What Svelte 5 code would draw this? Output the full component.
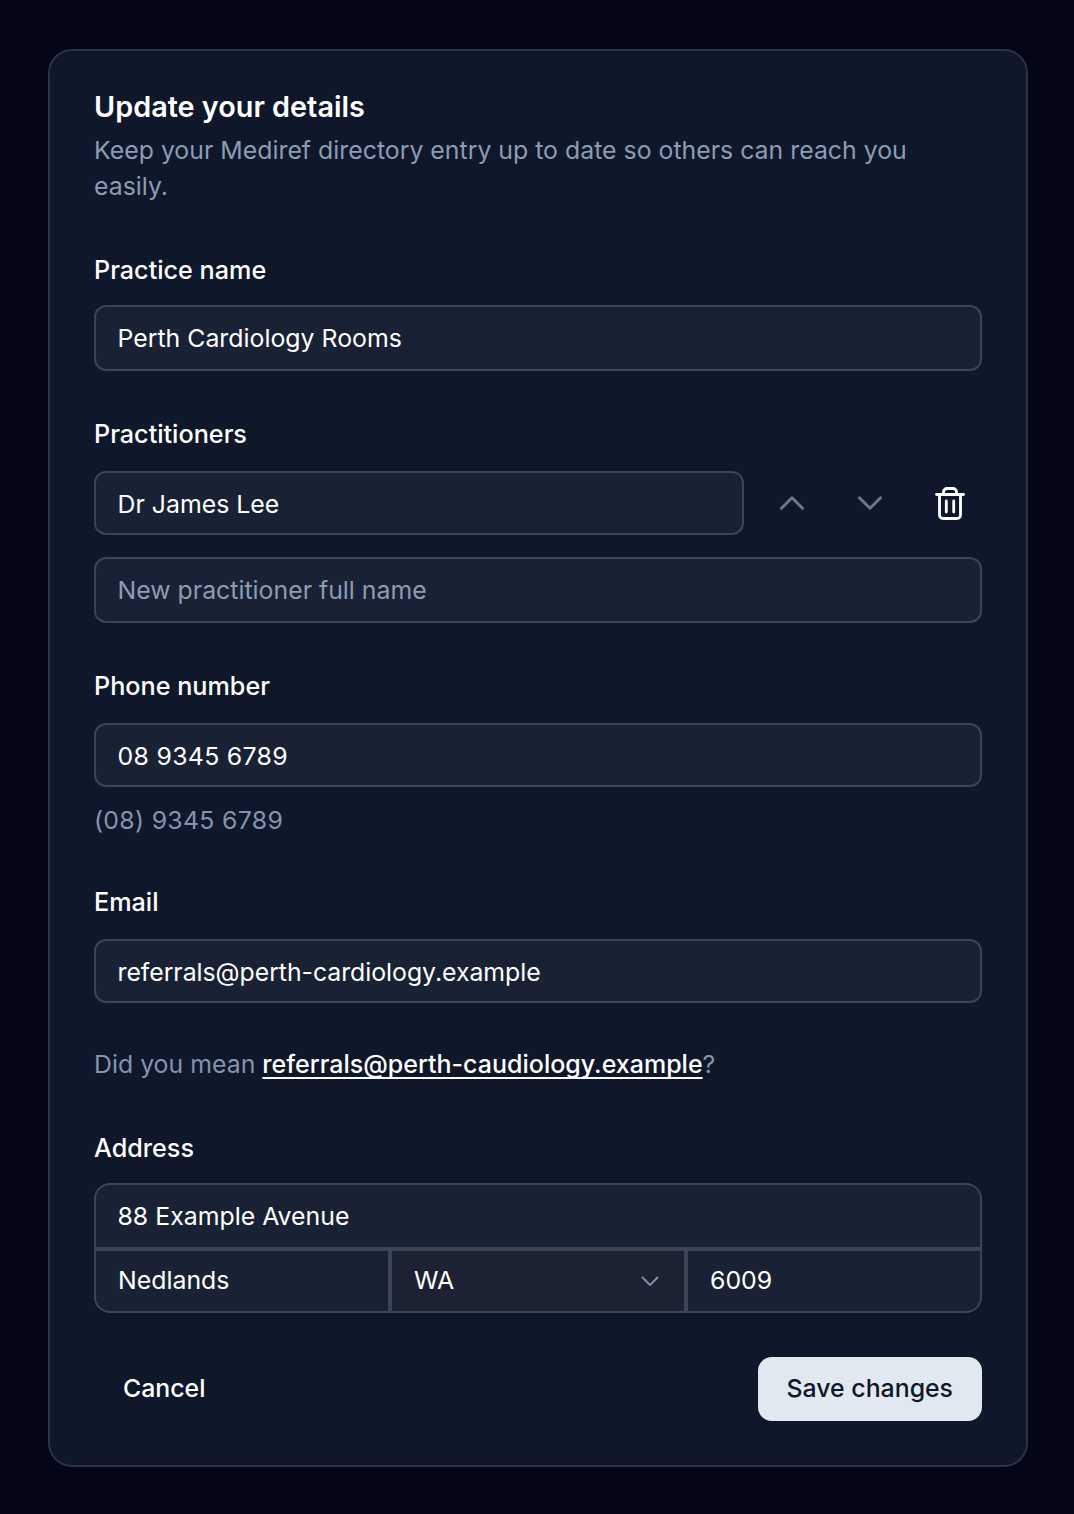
<script lang="ts">
	let practice = $state('Perth Cardiology Rooms');
	let newName = $state('');
	let phone = $state('08 9345 6789');
	let email = $state('referrals@perth-cardiology.example');
	let street = $state('88 Example Avenue');
	let suburb = $state('Nedlands');
	let region = $state('WA');
	let postcode = $state('6009');

	const REGIONS = ['ACT', 'NSW', 'NT', 'QLD', 'SA', 'TAS', 'VIC', 'WA'];
</script>

<main class="page">
	<form class="card" onsubmit={(e) => e.preventDefault()}>
		<header class="head">
			<h1>Update your details</h1>
			<p>Keep your Mediref directory entry up to date so others can reach you easily.</p>
		</header>

		<section class="field practice">
			<label for="practice">Practice name</label>
			<input id="practice" class="tall" bind:value={practice} />
		</section>

		<section class="field practitioners">
			<label for="pr-0">Practitioners</label>
			<div class="row">
				<input id="pr-0" value="Dr James Lee" />
				<button type="button" class="icon up" aria-label="Move up">
					<svg viewBox="0 0 24 24" width="36" height="36"><path d="M5 15.500l7-7 7 7" /></svg>
				</button>
				<button type="button" class="icon down" aria-label="Move down">
					<svg viewBox="0 0 24 24" width="36" height="36"><path d="M5 8.500l7 7 7-7" /></svg>
				</button>
				<button type="button" class="icon trash" aria-label="Remove">
					<svg viewBox="0 0 30 33" width="30" height="33">
						<path d="M1.500 7.500h27M4.500 7.500v20.500a3.500 3.500 0 0 0 3.500 3.500h14a3.500 3.500 0 0 0 3.500-3.500V7.500M8.500 7.500V5a3.500 3.500 0 0 1 3.500-3.500h6a3.500 3.500 0 0 1 3.500 3.500v2.500M11.300 14v11M18.700 14v11" />
					</svg>
				</button>
			</div>
			<input class="tall" placeholder="New practitioner full name" bind:value={newName} />
		</section>

		<section class="field phone">
			<label for="phone">Phone number</label>
			<input id="phone" class="digits" bind:value={phone} />
			<p class="hint digits">(08) 9345 6789</p>
		</section>

		<section class="field email">
			<label for="email">Email</label>
			<input id="email" class="tight" bind:value={email} />
			<p class="hint suggest">Did you mean <a href="#email">referrals@perth-caudiology.example</a>?</p>
		</section>

		<section class="field address">
			<label for="street">Address</label>
			<div class="group">
				<input id="street" class="street" bind:value={street} />
				<div class="parts">
					<input bind:value={suburb} aria-label="Suburb" />
					<div class="select">
						<select bind:value={region} aria-label="State">
							{#each REGIONS as r (r)}
								<option value={r}>{r}</option>
							{/each}
						</select>
						<svg viewBox="0 0 20 20" width="20" height="20"><path d="M2.500 6.500l7.500 7.500 7.500-7.500" /></svg>
					</div>
					<input bind:value={postcode} aria-label="Postcode" />
				</div>
			</div>
		</section>

		<footer class="actions">
			<button type="button" class="cancel">Cancel</button>
			<button type="submit" class="save">Save changes</button>
		</footer>
	</form>
</main>

<style>
	:global(body) {
		margin: 0;
		background: #020617;
	}
	.page {
		padding: 49px 46px 47px 48px;
		font-family: Inter, 'Liberation Sans', sans-serif;
	}
	.card {
		box-sizing: border-box;
		background: #0f172a;
		border: 2px solid #2a3446;
		border-radius: 24px;
		padding: 36px 44px 44px;
	}
	.head h1 {
		margin: 0;
		font-size: 28.800px;
		line-height: 40px;
		font-weight: 600;
		color: #fff;
	}
	.head p {
		margin: 5px 0 0;
		font-size: 24.850px;
		line-height: 36px;
		color: #8c9cb3;
	}
	.field {
		display: flex;
		flex-direction: column;
	}
	.practice {
		margin-top: 50px;
	}
	.practitioners {
		margin-top: 47px;
	}
	.phone {
		margin-top: 47px;
	}
	.email {
		margin-top: 50px;
	}
	.address {
		margin-top: 52px;
	}
	label {
		font-size: 25.200px;
		line-height: 32px;
		font-weight: 500;
		color: #fff;
		margin-bottom: 21px;
	}
	.practice label,
	.address label {
		margin-bottom: 19px;
	}
	input,
	select {
		box-sizing: border-box;
		width: 100%;
		height: 64px;
		padding: 2px 21.500px 0;
		background: #192234;
		border: 2px solid #3a4557;
		border-radius: 12px;
		color: #fff;
		font: 400 24.850px Inter, 'Liberation Sans', sans-serif;
		outline: none;
	}
	input.tall {
		height: 66px;
		padding-top: 0;
	}
	input::placeholder {
		color: #8c9cb3;
		opacity: 1;
	}
	.digits {
		letter-spacing: 0.3px;
	}
	.tight {
		letter-spacing: -0.05px;
	}
	.row {
		display: flex;
		align-items: center;
		margin-bottom: 22px;
	}
	.row input {
		flex: 1;
		min-width: 0;
	}
	.icon {
		display: flex;
		align-items: center;
		justify-content: center;
		flex: none;
		width: 78px;
		height: 64px;
		padding: 0;
		background: none;
		border: 0;
		cursor: pointer;
	}
	.icon svg {
		fill: none;
		stroke-linecap: round;
		stroke-linejoin: round;
	}
	.icon.up,
	.icon.down {
		stroke: #6f7785;
		stroke-width: 2;
	}
	.icon.up {
		margin-left: 9px;
	}
	.icon.trash {
		width: 64px;
		margin-left: 9px;
		stroke: #fff;
		stroke-width: 2.800;
	}
	.hint {
		margin: 17px 0 0;
		font-size: 24.850px;
		line-height: 32px;
		color: #8494ac;
	}
	.suggest {
		margin-top: 45px;
	}
	.suggest a {
		color: #fff;
		font-size: 25px;
		font-weight: 500;
		text-decoration: underline;
		text-decoration-thickness: 2px;
		text-decoration-skip-ink: none;
		text-underline-offset: 4px;
	}
	.group {
		border: 2px solid #3a4557;
		border-radius: 16px;
		overflow: hidden;
		background: #3a4557;
	}
	.group input,
	.group select {
		border: 0;
		border-radius: 0;
		height: 60px;
		padding: 0 22px 2px;
	}
	.group .street {
		display: block;
		height: 62px;
		margin-bottom: 4px;
		padding: 0 21.500px;
	}
	.parts {
		display: grid;
		grid-template-columns: repeat(3, 1fr);
		gap: 4px;
	}
	.parts input {
		min-width: 0;
	}
	.select {
		position: relative;
		background: #1c2232;
	}
	.group .select select {
		display: block;
		appearance: none;
		background: transparent;
	}
	.select svg {
		position: absolute;
		right: 24px;
		top: 20px;
		fill: none;
		stroke: #7d8ea8;
		stroke-width: 2;
		stroke-linecap: round;
		stroke-linejoin: round;
		pointer-events: none;
	}
	.actions {
		display: flex;
		align-items: center;
		justify-content: space-between;
		margin-top: 44px;
	}
	.actions button {
		height: 64px;
		border: 0;
		border-radius: 14px;
		padding: 0 29px 2px;
		font: 500 24.850px Inter, 'Liberation Sans', sans-serif;
		cursor: pointer;
	}
	.cancel {
		background: none;
		color: #fff;
	}
	.save {
		background: #e2e8f0;
		color: #0f172a;
	}
</style>
